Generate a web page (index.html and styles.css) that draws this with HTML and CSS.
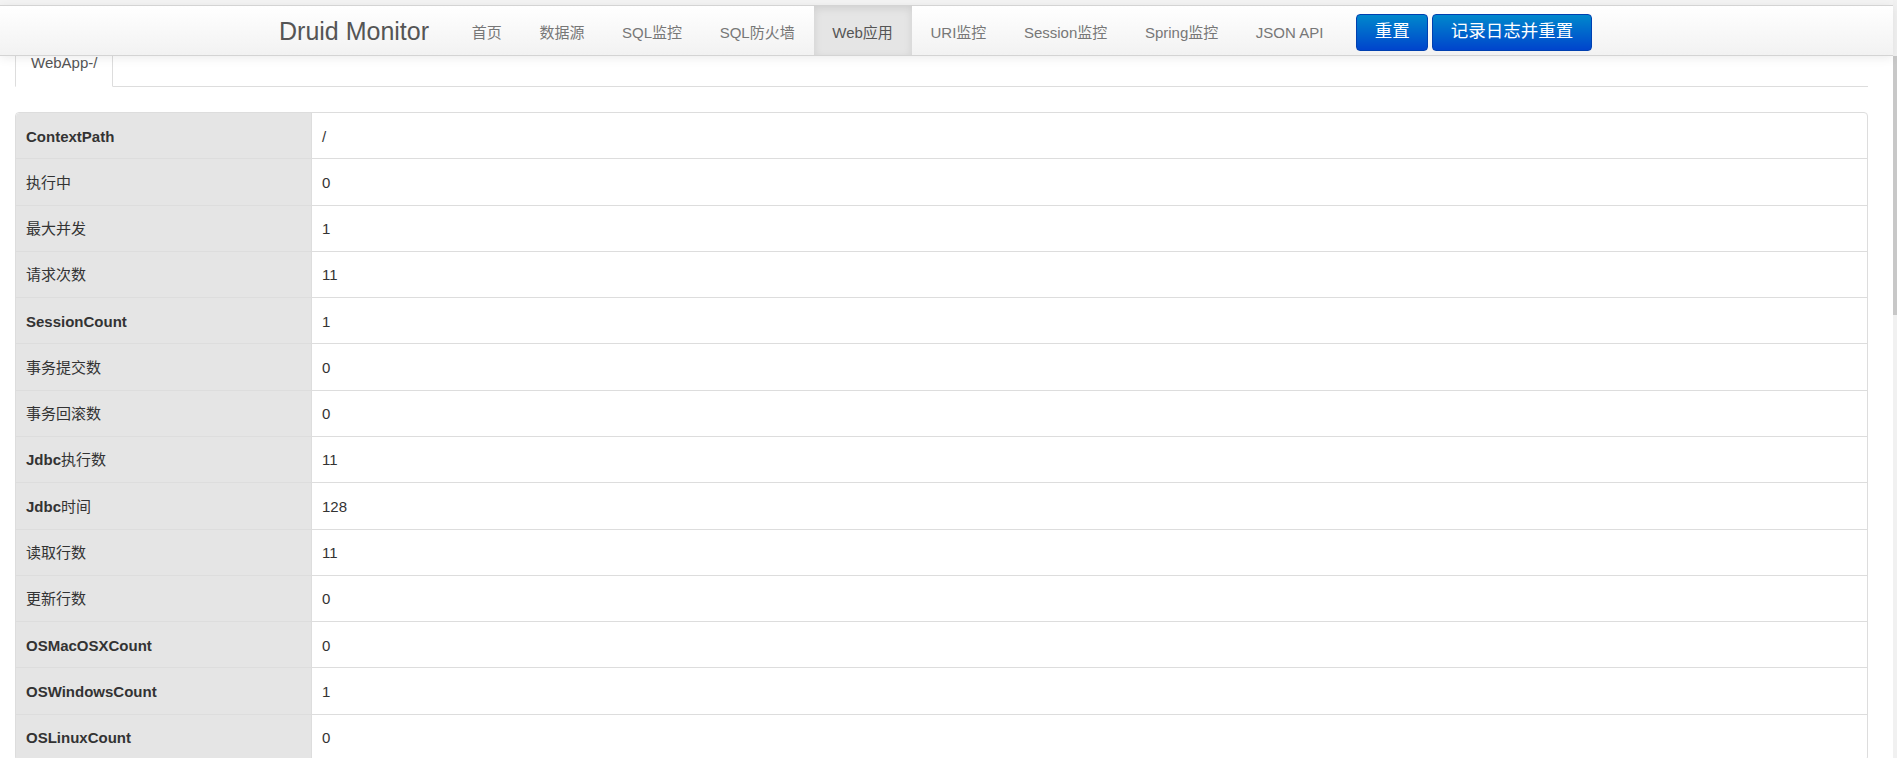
FILE: index.html
```html
<!DOCTYPE html>
<html lang="zh-CN">
<head>
    <meta charset="UTF-8">
    <title>Druid Monitor - Web应用</title>
    <link rel="stylesheet" href="styles.css">
</head>
<body>
    <div class="page">
        <div class="main">
            <div class="navbar">
                <div class="navbar-inner">
                    <a href="#" class="brand">Druid Monitor</a>
                    <ul class="nav">
                        <li><a href="#">首页</a></li>
                        <li><a href="#">数据源</a></li>
                        <li><a href="#">SQL监控</a></li>
                        <li><a href="#">SQL防火墙</a></li>
                        <li class="active"><a href="#">Web应用</a></li>
                        <li><a href="#">URI监控</a></li>
                        <li><a href="#">Session监控</a></li>
                        <li><a href="#">Spring监控</a></li>
                        <li><a href="#">JSON API</a></li>
                    </ul>
                    <a href="#" class="btn btn-first">重置</a>
                    <a href="#" class="btn">记录日志并重置</a>
                </div>
            </div>

            <div class="content">
                <ul class="tabs">
                    <li class="tab">WebApp-/</li>
                </ul>

                <table class="info">
                    <tr><th>ContextPath</th><td>/</td></tr>
                    <tr><th class="cn">执行中</th><td>0</td></tr>
                    <tr><th class="cn">最大并发</th><td>1</td></tr>
                    <tr><th class="cn">请求次数</th><td>11</td></tr>
                    <tr><th>SessionCount</th><td>1</td></tr>
                    <tr><th class="cn">事务提交数</th><td>0</td></tr>
                    <tr><th class="cn">事务回滚数</th><td>0</td></tr>
                    <tr><th>Jdbc<span class="cn">执行数</span></th><td>11</td></tr>
                    <tr><th>Jdbc<span class="cn">时间</span></th><td>128</td></tr>
                    <tr><th class="cn">读取行数</th><td>11</td></tr>
                    <tr><th class="cn">更新行数</th><td>0</td></tr>
                    <tr><th>OSMacOSXCount</th><td>0</td></tr>
                    <tr><th>OSWindowsCount</th><td>1</td></tr>
                    <tr><th>OSLinuxCount</th><td>0</td></tr>
                </table>
            </div>
        </div>
        <div class="scrollbar"><div class="thumb"></div></div>
    </div>
</body>
</html>
```

FILE: styles.css
```css
/* Base */
* {
    box-sizing: border-box;
}

html, body {
    margin: 0;
    padding: 0;
    height: 758px;
    overflow: hidden;
    background: #fff;
    font-family: "Liberation Sans", "Noto Sans CJK SC", sans-serif;
    color: #333;
}

a {
    text-decoration: none;
}

ul {
    margin: 0;
    padding: 0;
    list-style: none;
}

.page {
    display: flex;
    height: 758px;
}

.main {
    flex: 1;
    overflow: hidden;
}

/* Fake window scrollbar at the right edge */
.scrollbar {
    width: 4px;
    background: #f1f1f1;
    padding-top: 56px;
}

.thumb {
    height: 259px;
    background: #c8c8c8;
}

/* Fixed top navbar */
.navbar {
    position: fixed;
    top: 0;
    left: 0;
    right: 4px;
    z-index: 10;
    padding-top: 5px;
    background: #f4f4f4;
}

.navbar-inner {
    display: flex;
    align-items: flex-start;
    height: 51px;
    padding-left: 259px;
    background: linear-gradient(to bottom, #ffffff, #f2f2f2);
    border-top: 1px solid #d4d4d4;
    border-bottom: 1px solid #d4d4d4;
    box-shadow: 0 2px 10px rgba(0, 0, 0, 0.08);
}

.brand {
    padding: 10px 20px 9px;
    margin-right: 4px;
    font-size: 25px;
    line-height: 30px;
    color: #555;
}

.nav {
    display: flex;
}

.nav li a {
    display: block;
    padding: 17px 18.8px 12px;
    font-size: 15px;
    line-height: 20px;
    color: #777;
}

.nav li.active a {
    margin-top: -1px;
    padding-top: 18px;
    background: #e5e5e5;
    color: #555;
    box-shadow: inset 0 3px 8px rgba(0, 0, 0, 0.1);
}

.btn {
    margin-top: 8px;
    margin-left: 4px;
    padding: 0 17.5px 3px;
    font-size: 17.5px;
    line-height: 32px;
    color: #fff;
    background: linear-gradient(to bottom, #0088cc, #0044cc);
    border: 1px solid #0040b0;
    border-radius: 4px;
}

.btn-first {
    margin-left: 14px;
}

/* Page content under the navbar */
.content {
    padding: 45px 25px 0 15px;
}

.tabs {
    display: flex;
    border-bottom: 1px solid #ddd;
    margin-bottom: 25px;
}

.tab {
    padding: 8px 15px 15px;
    margin-bottom: -1px;
    font-size: 15px;
    line-height: 17px;
    color: #555;
    background: #fff;
    border: 1px solid #ddd;
    border-bottom-color: #fff;
    border-radius: 4px 4px 0 0;
}

/* Info table */
.info {
    width: 100%;
    border: 1px solid #ddd;
    border-radius: 4px;
    border-collapse: separate;
    border-spacing: 0;
    font-size: 15px;
}

.info th,
.info td {
    padding: 14.5px 10px 13.5px;
    line-height: 17.28px;
    text-align: left;
    vertical-align: top;
    border-top: 1px solid #ddd;
}

.info tr:first-child th,
.info tr:first-child td {
    border-top: none;
}

.info tr:first-child th {
    border-top-left-radius: 4px;
}

.info th {
    width: 295px;
    background: #e5e5e5;
    font-weight: bold;
    color: #333;
}

.info .cn {
    font-weight: normal;
}

.info td {
    border-left: 1px solid #ddd;
    color: #333;
}
```
